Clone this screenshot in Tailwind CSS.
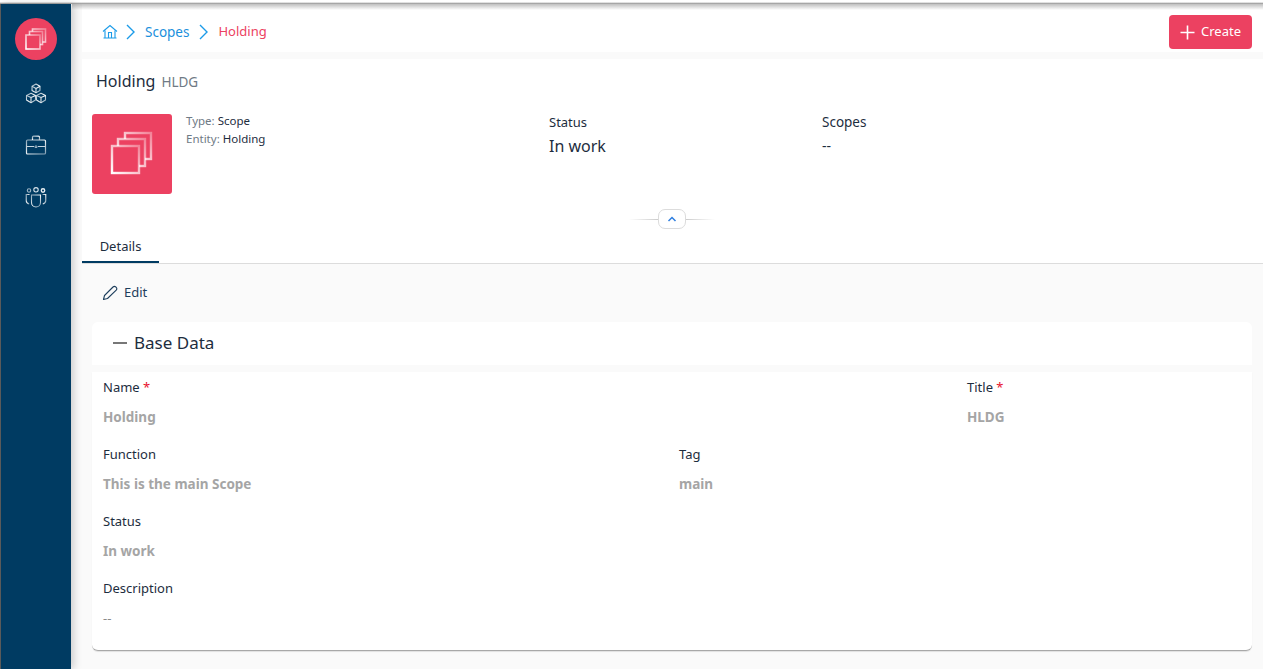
<!DOCTYPE html>
<html lang="en">

<head>
    <meta charset="UTF-8" />
    <title>Holding</title>
    <script src="https://cdn.jsdelivr.net/npm/@tailwindcss/browser@4"></script>
</head>

<body class="bg-[#fafafa] h-[669px] overflow-hidden relative font-['Noto_Sans',sans-serif] text-[#1d2d3e]">
    <!-- top shadow -->
    <div class="h-[4px] bg-gradient-to-b from-white from-50% to-[#8a8a8a]"></div>
    <div class="absolute left-[72px] right-0 top-[4px] h-[6px] bg-gradient-to-b from-black/25 to-transparent"></div>

    <svg width="0" height="0" class="absolute">
        <defs>
            <linearGradient id="fade" x1="1" y1="0" x2="0" y2="1">
                <stop offset="0" stop-color="#fff" stop-opacity=".35" />
                <stop offset="1" stop-color="#fff" stop-opacity="1" />
            </linearGradient>
            <linearGradient id="side" x1="0" y1="0" x2="1" y2="1" gradientUnits="objectBoundingBox">
                <stop offset="0" stop-color="#fff" stop-opacity=".55" />
                <stop offset=".5" stop-color="#fff" stop-opacity=".95" />
                <stop offset="1" stop-color="#fff" stop-opacity=".5" />
            </linearGradient>
        </defs>
    </svg>

    <div class="flex h-[665px]">
        <!-- sidebar -->
        <aside class="w-[71px] shrink-0 bg-[#003b62] border-l border-[#5a5a5a] flex flex-col items-center shadow-[3px_0_8px_rgba(0,0,0,0.18)]">
            <div class="mt-[14px] w-[42px] h-[42px] rounded-full bg-[#ec4161] flex items-center justify-center">
                <svg width="22" height="22" viewBox="0 0 22 22" fill="none" stroke="url(#fade)" stroke-width="1.6">
                    <rect x="7.5" y="1" width="13" height="13" />
                    <rect x="4.5" y="3.5" width="13" height="13" fill="#ec4161" />
                    <rect x="1" y="7" width="14" height="14" fill="#ec4161" />
                </svg>
            </div>
            <svg class="mt-[23px]" width="22" height="22" viewBox="0 0 22 22" fill="none" stroke="url(#side)" stroke-width="1.1" stroke-linejoin="round">
                <path d="M11 1l4 2.2v4.4L11 9.8 7 7.6V3.2z" />
                <path d="M7 3.2l4 2.2 4-2.2M11 5.4v4.4" />
                <path d="M6 10.2l4.5 2.2v4.6L6 19.8 1.5 17v-4.6z" />
                <path d="M1.5 12.4l4.5 2.2 4.5-2.2M6 14.6v5.2" />
                <path d="M16 10.2l4.5 2.2v4.6L16 19.8 11.5 17v-4.6z" />
                <path d="M11.5 12.4l4.5 2.2 4.5-2.2M16 14.6v5.2" />
            </svg>
            <svg class="mt-[30px]" width="22" height="20" viewBox="0 0 22 20" fill="none" stroke="url(#side)" stroke-width="1.2">
                <rect x="1.5" y="5" width="19" height="14" rx="1" />
                <path d="M7.5 5V2.2q0-1 1-1h5q1 0 1 1V5" />
                <path d="M1.5 11.5h7.5M13 11.5h7.5" stroke="#c5d4de" stroke-width="1" />
                <path d="M10 11h2v1.5h-2z" stroke="#c5d4de" stroke-width=".7" />
            </svg>
            <svg class="mt-[32px]" width="22" height="22" viewBox="0 0 22 22" fill="none" stroke="url(#side)" stroke-width="1.1">
                <circle cx="4" cy="3.5" r="1.7" stroke="#9fb6c6" />
                <circle cx="11" cy="2.8" r="2.2" stroke="#d5e2ea" />
                <circle cx="18" cy="3.5" r="1.7" stroke="#e8eef2" stroke-width="1.4" />
                <path d="M6.5 8h9v7.5a4.5 4.5 0 0 1-9 0z" />
                <path d="M4.5 7.5H1.2v6c0 2 1.2 3 3 3.5" />
                <path d="M17.5 7.5h3.3v6c0 2-1.2 3-3 3.5" />
            </svg>
        </aside>

        <main class="flex-1 min-w-0 pl-[11px] flex flex-col">
            <!-- breadcrumb bar -->
            <div class="h-[48px] shrink-0 bg-white flex items-center justify-between pl-[20px] pr-[11px] pt-[8px]">
                <nav class="flex items-center text-[13.5px]">
                    <svg width="16" height="16" viewBox="0 0 16 16" fill="none" stroke="#1b9be8" stroke-width="1.1">
                        <path d="M1 7.5L8 1.5l7 6" />
                        <path d="M3 6.5V14h10V6.5M1.5 14h13" />
                        <path d="M6.5 14V8.5h3V14" />
                    </svg>
                    <svg class="ml-[7px]" width="11" height="16" viewBox="0 0 11 16" fill="none" stroke="#1b9be8" stroke-width="1.4"><path d="M2 1l7 7-7 7" /></svg>
                    <span class="ml-[9px] text-[#1b90dc]">Scopes</span>
                    <svg class="ml-[9px]" width="11" height="16" viewBox="0 0 11 16" fill="none" stroke="#1b9be8" stroke-width="1.4"><path d="M2 1l7 7-7 7" /></svg>
                    <span class="ml-[9px] text-[13px] text-[#ec4161]">Holding</span>
                </nav>
                <button class="w-[83px] h-[34px] rounded-[4px] bg-[#ec4161] text-white text-[13px] flex items-center justify-center gap-[6px]">
                    <svg width="15" height="15" viewBox="0 0 15 15" stroke="#fff" stroke-width="1.6"><path d="M7.5 0.5v14M0.5 7.5h14" /></svg>
                    Create
                </button>
            </div>

            <!-- object header -->
            <section class="mt-[7px] h-[205px] shrink-0 bg-white relative border-b border-[#dcdcdc]">
                <h1 class="absolute left-[14px] top-[9px] flex items-baseline text-[16px] leading-[26px]">Holding <span class="ml-[6px] text-[13.5px] text-[#6f7a85]">HLDG</span></h1>
                <div class="pt-[55px] pl-[10px] flex">
                    <svg width="80" height="80" viewBox="0 0 80 80" fill="none" stroke="url(#fade)" stroke-width="2.4" class="rounded-[3px] bg-[#ec4161]">
                        <rect x="33" y="19" width="26" height="26" />
                        <rect x="26" y="25" width="27" height="27" fill="#ec4161" />
                        <rect x="20" y="32" width="27" height="27" fill="#ec4161" />
                    </svg>
                    <div class="ml-[14px] w-[363px] text-[11.5px] leading-[18px] -mt-[2px]">
                        <div><span class="text-[#6f7a85]">Type:</span> Scope</div>
                        <div><span class="text-[#6f7a85]">Entity:</span> Holding</div>
                    </div>
                    <div class="w-[273px] -mt-[1px]">
                        <div class="text-[13px] leading-[18px]">Status</div>
                        <div class="text-[16px] leading-[26px] mt-[2px]">In work</div>
                    </div>
                    <div class="-mt-[1px]">
                        <div class="text-[13.5px] leading-[18px]">Scopes</div>
                        <div class="text-[14px] leading-[26px] mt-[2px]">--</div>
                    </div>
                </div>
                <!-- collapse handle -->
                <div class="absolute left-[547px] top-[150px] w-[86px] h-[20px] flex items-center">
                    <div class="flex-1 h-px bg-gradient-to-r from-white to-[#cccccc]"></div>
                    <div class="w-[28px] h-[20px] rounded-[7px] border border-[#dcdcdc] bg-white flex items-center justify-center">
                        <svg width="10" height="6" viewBox="0 0 10 6" fill="none" stroke="#2f7fe0" stroke-width="1.5"><path d="M1.5 5L5 1.5 8.5 5" /></svg>
                    </div>
                    <div class="flex-1 h-px bg-gradient-to-l from-white to-[#cccccc]"></div>
                </div>
                <!-- tabs -->
                <div class="absolute left-0 bottom-0 w-[77px] h-[34px] border-b-[2px] border-[#003b62] text-[13px] flex items-center justify-center pt-[3px]">Details</div>
            </section>

            <!-- edit -->
            <div class="h-[58px] shrink-0 flex items-center pl-[20px] text-[13px] text-[#1d3e5c]">
                <svg width="16" height="16" viewBox="0 0 16 16" fill="none" stroke="#1d3e5c" stroke-width="1.1" stroke-linejoin="round">
                    <path d="M1.5 14.5l1-4L11 2q1.5-1.2 3 .2t.2 3L5.5 13.5z" />
                </svg>
                <span class="ml-[6px]">Edit</span>
            </div>

            <!-- base data -->
            <div class="ml-[10px] mr-[11px] h-[43px] shrink-0 bg-white rounded-t-[6px] flex items-center pl-[21px] pb-[1px] text-[17px]">
                <span class="w-[14px] h-[2px] bg-[#777]"></span>
                <span class="ml-[7px]">Base Data</span>
            </div>
            <div class="ml-[10px] mr-[11px] mt-[7px] h-[279px] shrink-0 bg-white rounded-b-[6px] border-b border-[#a8a8a8] shadow-[0_1px_1px_rgba(0,0,0,0.1)] pl-[11px] pt-[6px] text-[13px]">
                <div class="flex h-[67px]">
                    <div class="w-[864px]">
                        <div class="leading-[18px]">Name <span class="text-[#e8112d]">*</span></div>
                        <div class="mt-[12px] leading-[18px] text-[13.5px] font-bold text-[#a5a5a5]">Holding</div>
                    </div>
                    <div>
                        <div class="leading-[18px]">Title <span class="text-[#e8112d]">*</span></div>
                        <div class="mt-[12px] leading-[18px] text-[13.5px] font-bold text-[#a5a5a5]">HLDG</div>
                    </div>
                </div>
                <div class="flex h-[67px]">
                    <div class="w-[576px]">
                        <div class="leading-[18px]">Function</div>
                        <div class="mt-[12px] leading-[18px] text-[13.5px] font-bold text-[#a5a5a5]">This is the main Scope</div>
                    </div>
                    <div>
                        <div class="leading-[18px]">Tag</div>
                        <div class="mt-[12px] leading-[18px] text-[13.5px] font-bold text-[#a5a5a5]">main</div>
                    </div>
                </div>
                <div class="h-[67px]">
                    <div class="leading-[18px]">Status</div>
                    <div class="mt-[12px] leading-[18px] text-[13.5px] font-bold text-[#a5a5a5]">In work</div>
                </div>
                <div>
                    <div class="leading-[18px]">Description</div>
                    <div class="mt-[12px] leading-[18px] text-[#8a8a8a]">--</div>
                </div>
            </div>
        </main>
    </div>
</body>

</html>
